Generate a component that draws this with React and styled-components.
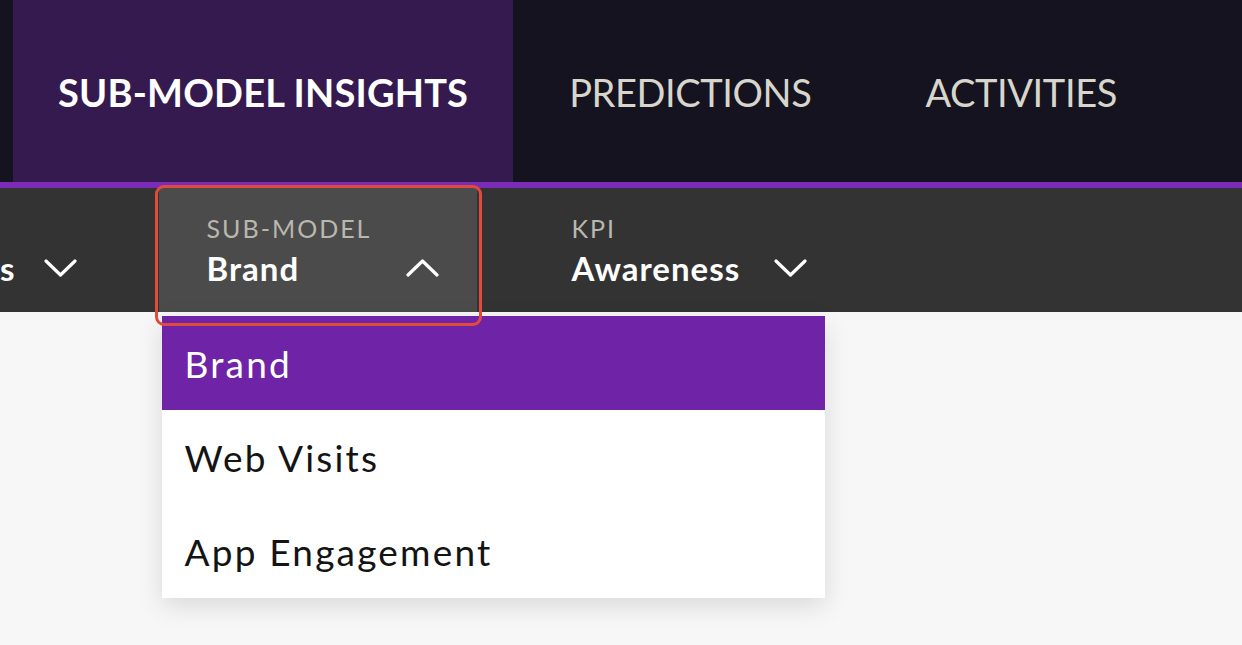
import React from 'react'
import styled, { createGlobalStyle } from 'styled-components'

const GlobalStyle = createGlobalStyle`
  html, body {
    margin: 0;
    padding: 0;
    background: #f7f7f7;
    font-family: Lato, "Open Sans", sans-serif;
  }
  * { box-sizing: border-box; }
`

const Page = styled.div`
  width: 1242px;
  height: 645px;
  overflow: hidden;
  background: #f7f7f7;
`

const TopNav = styled.nav`
  display: flex;
  height: 182px;
  padding-left: 13px;
  background: #14131f;
`

const Tab = styled.div`
  display: flex;
  align-items: center;
  height: 100%;
  padding: 2px ${(p) => (p.$active ? '45px 0 45px' : '58px 0 56px')};
  background: ${(p) => (p.$active ? '#351a4f' : 'transparent')};
  color: ${(p) => (p.$active ? '#ffffff' : '#d8d6cc')};
  font-size: 38px;
  font-weight: ${(p) => (p.$active ? 700 : 400)};
  letter-spacing: ${(p) => (p.$active ? '0.2px' : '-0.4px')};
  white-space: nowrap;
`

const Accent = styled.div`
  height: 6px;
  background: #7a2bb8;
`

const FilterBar = styled.div`
  display: flex;
  gap: 47px;
  height: 124px;
  background: #333333;
`

const Filter = styled.div`
  position: relative;
  display: flex;
  flex-direction: column;
  justify-content: center;
  gap: 5px;
  padding: ${(p) => (p.$flush ? '0 35px 0 0' : '0 38px 0 48px')};
  background: ${(p) => (p.$open ? '#4b4b4b' : 'transparent')};
`

const Label = styled.div`
  color: #b9b7ae;
  font-size: 25px;
  letter-spacing: 2px;
  line-height: 30px;
  height: 30px;
`

const ValueRow = styled.div`
  display: flex;
  align-items: center;
  justify-content: space-between;
  gap: ${(p) => p.$gap || '34px'};
  min-width: ${(p) => p.$minWidth || 'auto'};
  color: #ffffff;
  font-size: 33px;
  font-weight: 700;
  line-height: 40px;
  letter-spacing: 1px;
`

const Chevron = styled.svg`
  width: 33px;
  height: 20px;
  flex-shrink: 0;
`

const FocusRing = styled.div`
  position: absolute;
  left: -4px;
  right: -5px;
  top: -3px;
  bottom: -14px;
  border: 3px solid #e24b3c;
  border-radius: 9px;
  pointer-events: none;
  z-index: 3;
`

const Menu = styled.ul`
  position: absolute;
  left: 3px;
  top: calc(100% + 4px);
  width: 663px;
  margin: 0;
  padding: 0;
  list-style: none;
  background: #ffffff;
  box-shadow: 0 8px 24px rgba(0, 0, 0, 0.12);
  z-index: 2;
`

const MenuItem = styled.li`
  display: flex;
  align-items: center;
  height: 94px;
  padding-left: 23px;
  font-size: 37px;
  font-weight: 400;
  letter-spacing: 2.2px;
  color: ${(p) => (p.$selected ? '#ffffff' : '#141414')};
  background: ${(p) => (p.$selected ? '#6f23a6' : '#ffffff')};
`

const ChevronIcon = ({ up }) => (
  <Chevron viewBox="0 0 33 20" fill="none">
    <polyline
      points={up ? '2,17 16.5,3 31,17' : '2,3 16.5,17 31,3'}
      stroke="#ffffff"
      strokeWidth="3.2"
      strokeLinecap="round"
      strokeLinejoin="round"
    />
  </Chevron>
)

const options = ['Brand', 'Web Visits', 'App Engagement']

export default function App() {
  return (
    <Page>
      <GlobalStyle />
      <TopNav>
        <Tab $active>SUB-MODEL INSIGHTS</Tab>
        <Tab>PREDICTIONS</Tab>
        <Tab>ACTIVITIES</Tab>
      </TopNav>
      <Accent />
      <FilterBar>
        <Filter $flush>
          <Label />
          <ValueRow $gap="28px">
            <span>s</span>
            <ChevronIcon />
          </ValueRow>
        </Filter>
        <Filter $open>
          <Label>SUB-MODEL</Label>
          <ValueRow $minWidth="232px">
            <span>Brand</span>
            <ChevronIcon up />
          </ValueRow>
          <FocusRing />
          <Menu>
            {options.map((o, i) => (
              <MenuItem key={o} $selected={i === 0}>
                {o}
              </MenuItem>
            ))}
          </Menu>
        </Filter>
        <Filter>
          <Label>KPI</Label>
          <ValueRow>
            <span>Awareness</span>
            <ChevronIcon />
          </ValueRow>
        </Filter>
      </FilterBar>
    </Page>
  )
}
